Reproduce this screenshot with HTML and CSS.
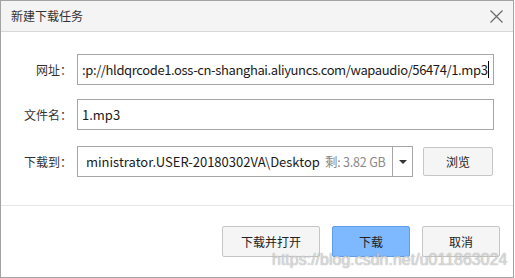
FILE: index.html
```html
<!DOCTYPE html>
<html lang="zh">
<head>
<meta charset="utf-8">
<link rel="stylesheet" href="styles.css">
</head>
<body>
<div class="dialog">
  <div class="titlebar">
    <span class="title">新建下载任务</span>
    <svg class="close" width="13" height="13" viewBox="0 0 13 13"><path d="M0.5 0.5 L12.5 12.5 M12.5 0.5 L0.5 12.5" stroke="#6a6a6a" stroke-width="1.2" fill="none"/></svg>
  </div>
  <div class="form">
    <div class="row">
      <label class="label">网址：</label>
      <div class="field url"><span class="value tight">:p://hldqrcode1.oss-cn-shanghai.aliyuncs.com/wapaudio/56474/1.mp3</span><span class="caret"></span></div>
    </div>
    <div class="row">
      <label class="label">文件名：</label>
      <div class="field"><span class="value">1.mp3</span></div>
    </div>
    <div class="row row-last">
      <label class="label">下载到：</label>
      <div class="combo">
        <div class="combo-text"><span class="value">ministrator.USER-20180302VA\Desktop</span><span class="free">剩: 3.82 GB</span></div>
        <div class="combo-drop"><svg width="8" height="4" viewBox="0 0 8 4"><path d="M0 0 H8 L4 4 Z" fill="#333"/></svg></div>
      </div>
      <button class="btn browse">浏览</button>
    </div>
  </div>
  <div class="footer">
    <button class="btn wide">下载并打开</button>
    <button class="btn primary">下载</button>
    <button class="btn">取消</button>
  </div>
  <div class="watermark">https://blog.csdn.net/u011863024</div>
</div>
</body>
</html>
```
FILE: styles.css
```css
* { box-sizing: border-box; }
html, body { margin: 0; padding: 0; background: #fff; }
body {
  font-family: "Noto Sans CJK SC", "Noto Sans", sans-serif;
  font-size: 12px;
  color: #333;
}
.dialog {
  position: relative;
  width: 514px;
  height: 278px;
  border: 1px solid #a3a3a3;
  background: #fff;
  overflow: hidden;
}
.titlebar {
  height: 31px;
  background: #f4f4f4;
  border-bottom: 1px solid #d8d8d8;
  display: flex;
  align-items: center;
  justify-content: space-between;
  padding: 0 10px 0 10px;
}
.title { font-size: 12px; color: #333; line-height: 30px; }
.close { display: block; margin-top: 0; }
.form {
  display: flex;
  flex-direction: column;
  gap: 14px;
  padding: 22px 19px 0 0;
}
.row {
  display: flex;
  align-items: center;
  height: 31px;
}
.row-last { margin-top: 2px; }
.label {
  width: 76px;
  padding-right: 5px;
  text-align: right;
  color: #333;
  font-size: 12px;
}
.field {
  flex: 1;
  height: 31px;
  border: 1px solid #a6a6a6;
  display: flex;
  align-items: center;
  padding-left: 4px;
  overflow: hidden;
  white-space: nowrap;
}
.value {
  font-size: 13px;
  color: #1a1a1a;
}
.tight { letter-spacing: -0.38px; }
.caret {
  display: inline-block;
  width: 1px;
  height: 17px;
  background: #000;
  margin-left: 1px;
  flex: none;
}
.combo {
  width: 336px;
  height: 31px;
  border: 1px solid #a6a6a6;
  display: flex;
}
.combo-text {
  flex: 1;
  display: flex;
  align-items: center;
  padding-left: 8px;
  white-space: nowrap;
  overflow: hidden;
}
.free { color: #8a8a8a; font-size: 12.5px; margin-left: 5px; letter-spacing: -0.2px; }
.combo-drop {
  width: 20px;
  border-left: 1px solid #a6a6a6;
  display: flex;
  align-items: center;
  justify-content: center;
}
.combo-drop svg { display: block; }
.btn {
  font-family: "Noto Sans CJK SC", "Noto Sans", sans-serif;
  font-size: 12px;
  color: #222;
  background: #f5f5f5;
  border: 1px solid #c6c6c6;
  border-radius: 2px;
  height: 31px;
  width: 78px;
  padding: 0;
}
.browse {
  width: 70px;
  height: 29px;
  margin-left: 10px;
}
.footer {
  margin-top: 28px;
  border-top: 1px solid #e4e4e4;
  display: flex;
  justify-content: flex-end;
  gap: 12px;
  padding: 20px 13px 0 0;
}
.wide { width: 98px; }
.primary {
  background: #7eb8ff;
  border-color: #5f9eea;
}
.watermark {
  position: absolute;
  left: 271px;
  top: 250px;
  font-family: "Liberation Sans", Arial, sans-serif;
  font-size: 16px;
  color: rgba(255, 255, 255, 0.55);
  text-shadow: 0 0 1px rgba(120, 120, 120, 0.55), 0 0 1px rgba(120, 120, 120, 0.4);
  white-space: nowrap;
  pointer-events: none;
}
```
